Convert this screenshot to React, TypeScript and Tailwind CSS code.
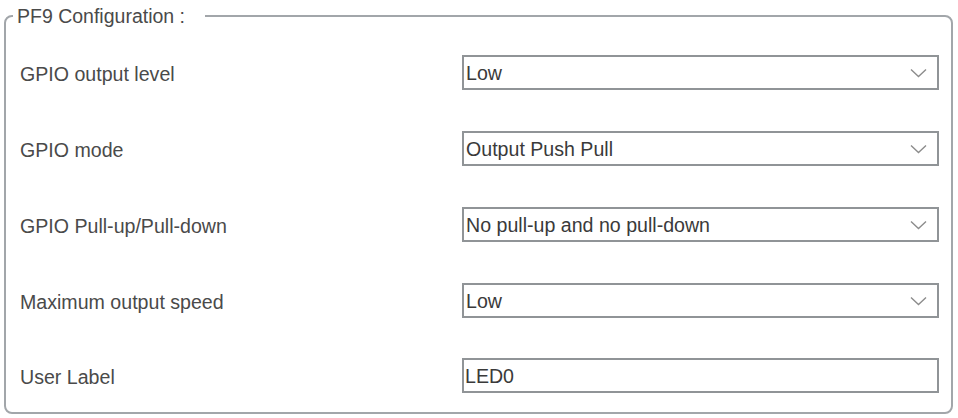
import React from "react";

const rows = [
  { label: "GPIO output level", value: "Low", kind: "select" },
  { label: "GPIO mode", value: "Output Push Pull", kind: "select" },
  { label: "GPIO Pull-up/Pull-down", value: "No pull-up and no pull-down", kind: "select" },
  { label: "Maximum output speed", value: "Low", kind: "select" },
  { label: "User Label", value: "LED0", kind: "input" },
];

function Chevron() {
  return (
    <svg width="17" height="10" viewBox="0 0 17 10" fill="none">
      <polyline points="1,1.5 8.5,8.5 16,1.5" stroke="#8c8c8c" strokeWidth="1.4" />
    </svg>
  );
}

export default function App() {
  return (
    <div
      className="w-[958px] h-[418px] bg-white overflow-hidden pt-[6px]"
      style={{ fontFamily: '"Liberation Sans", Arial, sans-serif' }}
    >
      <fieldset className="ml-[4px] w-[949px] h-[408px] border-2 border-[#a2a6aa] rounded-[8px] pl-[14px] pr-[12px]">
        <legend className="ml-[-7px] pl-[4px] pr-[20px] text-[19.5px] leading-[20px] text-[#4a4a4a]">
          PF9 Configuration :
        </legend>

        {/* rows */}
        <div className="flex flex-col gap-[42px] pt-[29px]">
          {rows.map((row) => (
            <div
              key={row.label}
              className={`grid grid-cols-[1fr_477px] items-center ${
                row.kind === "input" ? "h-[31px] -mt-[1px]" : "h-[34px]"
              }`}
            >
              <span className="pt-[3px] text-[19.6px] text-[#4a4a4a]">{row.label}</span>
              {row.kind === "select" ? (
                <div className="h-full border-2 border-[#909497] flex items-center justify-between pl-[2px] pr-[10px]">
                  <span className="pt-[2px] text-[19.6px] text-[#3a3a3a]">{row.value}</span>
                  <Chevron />
                </div>
              ) : (
                <div className="h-full border-2 border-[#909497] flex items-center pl-[1px]">
                  <span className="pt-[2px] text-[19.6px] text-[#3a3a3a]">{row.value}</span>
                </div>
              )}
            </div>
          ))}
        </div>
      </fieldset>
    </div>
  );
}
